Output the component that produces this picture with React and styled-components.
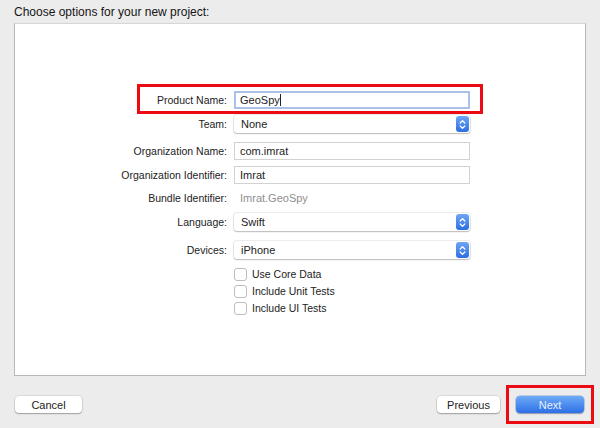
import React from "react";
import styled, { createGlobalStyle, css } from "styled-components";

const GlobalStyle = createGlobalStyle`
  html, body {
    margin: 0;
    padding: 0;
    background: #ececec;
  }
  body {
    font-family: "Liberation Sans", Arial, sans-serif;
  }
`;

const Window = styled.div`
  width: 600px;
  height: 428px;
  box-sizing: border-box;
  padding: 0 14px;
  display: flex;
  flex-direction: column;
  background: #ececec;
`;

const Heading = styled.h1`
  margin: 0;
  height: 23px;
  box-sizing: border-box;
  padding-top: 5px;
  font-size: 12px;
  line-height: 14px;
  font-weight: normal;
  color: #151515;
`;

const Panel = styled.div`
  height: 353px;
  box-sizing: border-box;
  background: #fff;
  border: 1px solid #b7b7b7;
  border-top-color: #d6d6d6;
  padding: 67px 0 0 100px;
  display: flex;
  flex-direction: column;
  align-items: flex-start;
`;

const redBox = css`
  &::after {
    content: "";
    position: absolute;
    border: 3px solid #ec0b12;
    pointer-events: none;
  }
`;

const Row = styled.div`
  position: relative;
  display: flex;
  align-items: center;
  height: 18px;
  margin-top: ${(p) => p.$mt ?? 6}px;

  ${(p) =>
    p.$highlight &&
    css`
      ${redBox}
      &::after {
        left: 22px;
        right: -13px;
        top: -7px;
        bottom: -5px;
      }
    `}
`;

const Label = styled.label`
  width: 112px;
  margin-right: 7px;
  text-align: right;
  font-size: 10.5px;
  color: #222;
  white-space: nowrap;
`;

const TextField = styled.div`
  width: 236px;
  height: 18px;
  box-sizing: border-box;
  background: #fff;
  border: 1px solid #d2d2d2;
  padding: 0 5px;
  font-size: 11px;
  line-height: 16px;
  color: #222;

  ${(p) =>
    p.$focused &&
    css`
      border: 2px solid #a9c0e8;
      padding: 0 4px;
      line-height: 14px;
    `}
`;

const Caret = styled.span`
  display: inline-block;
  width: 1px;
  height: 12px;
  background: #222;
  vertical-align: -2px;
`;

const StaticValue = styled.div`
  padding-left: 6px;
  font-size: 11px;
  color: #8e8e8e;
`;

const Popup = styled.div`
  width: 236px;
  height: 18px;
  box-sizing: border-box;
  display: flex;
  align-items: center;
  justify-content: space-between;
  background: #fff;
  border-radius: 3px;
  box-shadow: 0 0 0 1px rgba(0, 0, 0, 0.07), 0 1px 1.5px rgba(0, 0, 0, 0.22);
  padding: 0 1px 0 7px;
  font-size: 11px;
  color: #222;
`;

const Stepper = styled.span`
  width: 13px;
  height: 16px;
  border-radius: 3px;
  background: linear-gradient(#6ea6f4, #2d6fe2);
  display: flex;
  align-items: center;
  justify-content: center;
`;

const Checks = styled.div`
  display: flex;
  flex-direction: column;
  gap: 5px;
  margin: 9px 0 0 119px;
`;

const CheckRow = styled.div`
  display: flex;
  align-items: center;
  gap: 5px;
  height: 12px;
  font-size: 10.5px;
  color: #222;
`;

const Box = styled.span`
  width: 11px;
  height: 11px;
  border-radius: 3px;
  background: #fff;
  border: 1px solid #bdbdbd;
`;

const Footer = styled.div`
  display: flex;
  align-items: center;
  padding-top: 20px;
  gap: 16px;
`;

const Button = styled.button`
  width: ${(p) => p.$w}px;
  height: 17px;
  padding: 0;
  border: none;
  border-radius: 4px;
  font-family: "Liberation Sans", Arial, sans-serif;
  font-size: 11px;
  color: #222;
  background: #fff;
  box-shadow: 0 0 0 0.5px rgba(0, 0, 0, 0.15), 0 1px 1.5px rgba(0, 0, 0, 0.28);

  ${(p) =>
    p.$primary &&
    css`
      color: #e8f0ff;
      background: linear-gradient(#6eaaf7, #2d70e6);
      box-shadow: 0 0 0 0.5px rgba(20, 70, 180, 0.4), 0 1px 1.5px rgba(0, 0, 0, 0.28);
    `}
`;

const Spacer = styled.div`
  flex: 1;
`;

const NextWrap = styled.div`
  position: relative;
  display: flex;
  margin-right: 2px;
  ${redBox}
  &::after {
    left: -10px;
    right: -10px;
    top: -11px;
    bottom: -11px;
  }
`;

const Arrows = () => (
  <svg width="7" height="11" viewBox="0 0 7 11" fill="none" stroke="#fff" strokeWidth="1.3" strokeLinecap="round" strokeLinejoin="round">
    <path d="M1.2 4 L3.5 1.6 L5.8 4" />
    <path d="M1.2 7 L3.5 9.4 L5.8 7" />
  </svg>
);

const fields = [
  { label: "Organization Name:", value: "com.imrat", mt: 9 },
  { label: "Organization Identifier:", value: "Imrat", mt: 6 },
];

export default function App() {
  return (
    <>
      <GlobalStyle />
      <Window>
        <Heading>Choose options for your new project:</Heading>
        <Panel>
          <Row $mt={0} $highlight>
            <Label>Product Name:</Label>
            <TextField $focused>
              GeoSpy<Caret />
            </TextField>
          </Row>
          <Row>
            <Label>Team:</Label>
            <Popup>
              None
              <Stepper>
                <Arrows />
              </Stepper>
            </Popup>
          </Row>
          {fields.map((f) => (
            <Row key={f.label} $mt={f.mt}>
              <Label>{f.label}</Label>
              <TextField>{f.value}</TextField>
            </Row>
          ))}
          <Row $mt={5}>
            <Label>Bundle Identifier:</Label>
            <StaticValue>Imrat.GeoSpy</StaticValue>
          </Row>
          <Row>
            <Label>Language:</Label>
            <Popup>
              Swift
              <Stepper>
                <Arrows />
              </Stepper>
            </Popup>
          </Row>
          <Row $mt={10}>
            <Label>Devices:</Label>
            <Popup>
              iPhone
              <Stepper>
                <Arrows />
              </Stepper>
            </Popup>
          </Row>
          <Checks>
            {["Use Core Data", "Include Unit Tests", "Include UI Tests"].map((t) => (
              <CheckRow key={t}>
                <Box />
                {t}
              </CheckRow>
            ))}
          </Checks>
        </Panel>
        <Footer>
          <Button $w={67} style={{ marginLeft: 1 }}>Cancel</Button>
          <Spacer />
          <Button $w={63}>Previous</Button>
          <NextWrap>
            <Button $w={68} $primary>
              Next
            </Button>
          </NextWrap>
        </Footer>
      </Window>
    </>
  );
}
